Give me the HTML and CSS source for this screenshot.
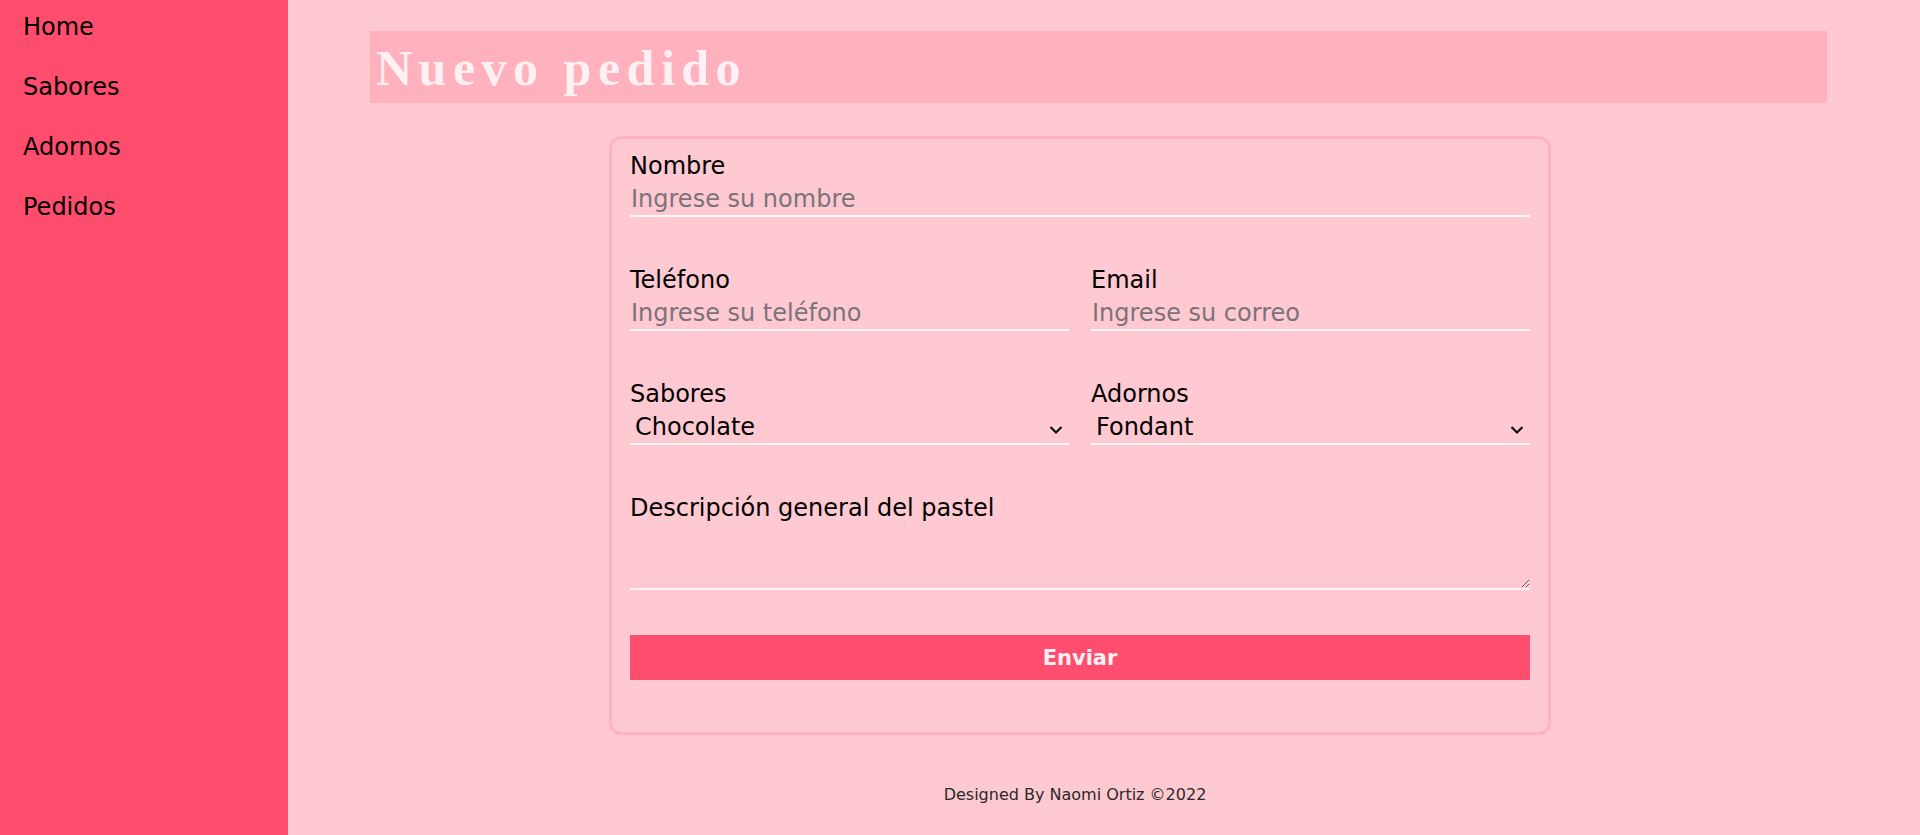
FILE: index.html
```html
<!DOCTYPE html>
<html lang="es">
<head>
<meta charset="utf-8">
<title>Nuevo pedido</title>
<link rel="stylesheet" href="styles.css">
</head>
<body>
<aside class="sidebar">
  <nav class="nav">
    <a class="nav-link" href="#">Home</a>
    <a class="nav-link" href="#">Sabores</a>
    <a class="nav-link" href="#">Adornos</a>
    <a class="nav-link" href="#">Pedidos</a>
  </nav>
</aside>
<main class="main">
  <header class="page-header">
    <h1 class="page-title">Nuevo pedido</h1>
  </header>
  <form class="card">
    <div class="row">
      <label class="field">
        <span class="label">Nombre</span>
        <input class="input" type="text" placeholder="Ingrese su nombre">
      </label>
    </div>
    <div class="row two">
      <label class="field">
        <span class="label">Teléfono</span>
        <input class="input" type="text" placeholder="Ingrese su teléfono">
      </label>
      <label class="field">
        <span class="label">Email</span>
        <input class="input" type="text" placeholder="Ingrese su correo">
      </label>
    </div>
    <div class="row two">
      <label class="field">
        <span class="label">Sabores</span>
        <span class="select-wrap">
          <select class="select"><option>Chocolate</option></select>
          <svg class="chevron" width="14" height="10" viewBox="0 0 14 10"><path d="M1.5 2 L7 7.5 L12.5 2" fill="none" stroke="#111" stroke-width="2.2"/></svg>
        </span>
      </label>
      <label class="field">
        <span class="label">Adornos</span>
        <span class="select-wrap">
          <select class="select"><option>Fondant</option></select>
          <svg class="chevron" width="14" height="10" viewBox="0 0 14 10"><path d="M1.5 2 L7 7.5 L12.5 2" fill="none" stroke="#111" stroke-width="2.2"/></svg>
        </span>
      </label>
    </div>
    <div class="row last">
      <label class="field">
        <span class="label">Descripción general del pastel</span>
        <textarea class="textarea"></textarea>
      </label>
    </div>
    <button class="submit" type="button">Enviar</button>
  </form>
  <footer class="footer">Designed By Naomi Ortiz ©2022</footer>
</main>
</body>
</html>
```
FILE: styles.css
```css
* { box-sizing: border-box; }
html, body { margin: 0; padding: 0; }
body {
  display: flex;
  min-height: 835px;
  font-family: "DejaVu Sans", sans-serif;
  background: #ffc9d2;
}
.sidebar {
  width: 288px;
  flex: 0 0 288px;
  min-height: 835px;
  background: #ff4d6d;
}
.nav {
  display: flex;
  flex-direction: column;
  gap: 32px;
  padding: 13px 0 0 23px;
}
.nav-link {
  color: #000;
  text-decoration: none;
  font-size: 24px;
  line-height: 28px;
}
.main {
  flex: 1;
  background: #ffc9d2;
  padding-top: 31px;
}
.page-header {
  margin-left: 82px;
  width: 1457px;
  height: 72px;
  background: #ffb1bd;
  padding: 2px 0 0 6px;
}
.page-title {
  margin: 0;
  font-family: "Liberation Serif", serif;
  font-weight: bold;
  font-size: 50px;
  line-height: 70px;
  letter-spacing: 6.5px;
  color: #fff0f3;
}
.card {
  margin: 33px 0 0 321px;
  width: 942px;
  border: 3px solid #ffb3c1;
  border-radius: 12px;
  padding: 13px 18px 52px;
  display: flex;
  flex-direction: column;
}
.row { margin-bottom: 49px; }
.row.two {
  display: grid;
  grid-template-columns: 1fr 1fr;
  column-gap: 22px;
}
.row.last { margin-bottom: 45px; }
.field {
  display: flex;
  flex-direction: column;
}
.label {
  font-size: 24px;
  line-height: 28px;
  color: #000;
}
.input, .select, .textarea {
  font-family: "DejaVu Sans", sans-serif;
  font-size: 24px;
  line-height: 28px;
  color: #000;
  background: transparent;
  border: none;
  border-bottom: 2px solid #fff4f6;
  outline: none;
  border-radius: 0;
  margin: 0;
  width: 100%;
}
.input {
  height: 37px;
  padding: 5px 1px 2px;
}
.input::placeholder { color: #7a7478; }
.select-wrap {
  position: relative;
  display: block;
}
.select {
  appearance: none;
  -webkit-appearance: none;
  height: 37px;
  padding: 5px 30px 2px 5px;
  display: block;
}
.chevron {
  position: absolute;
  right: 6px;
  top: 17px;
  pointer-events: none;
}
.textarea {
  height: 68px;
  padding: 4px 2px;
  resize: both;
  display: block;
}
.submit {
  height: 45px;
  border: none;
  background: #ff4d6d;
  color: #fff0f3;
  font-family: "DejaVu Sans", sans-serif;
  font-weight: bold;
  font-size: 21px;
  padding: 0;
}
.footer {
  margin: 50px 0 0 321px;
  width: 942px;
  text-align: center;
  font-size: 16px;
  line-height: 19px;
  color: #2a2a2a;
  padding-right: 10px;
}
```
